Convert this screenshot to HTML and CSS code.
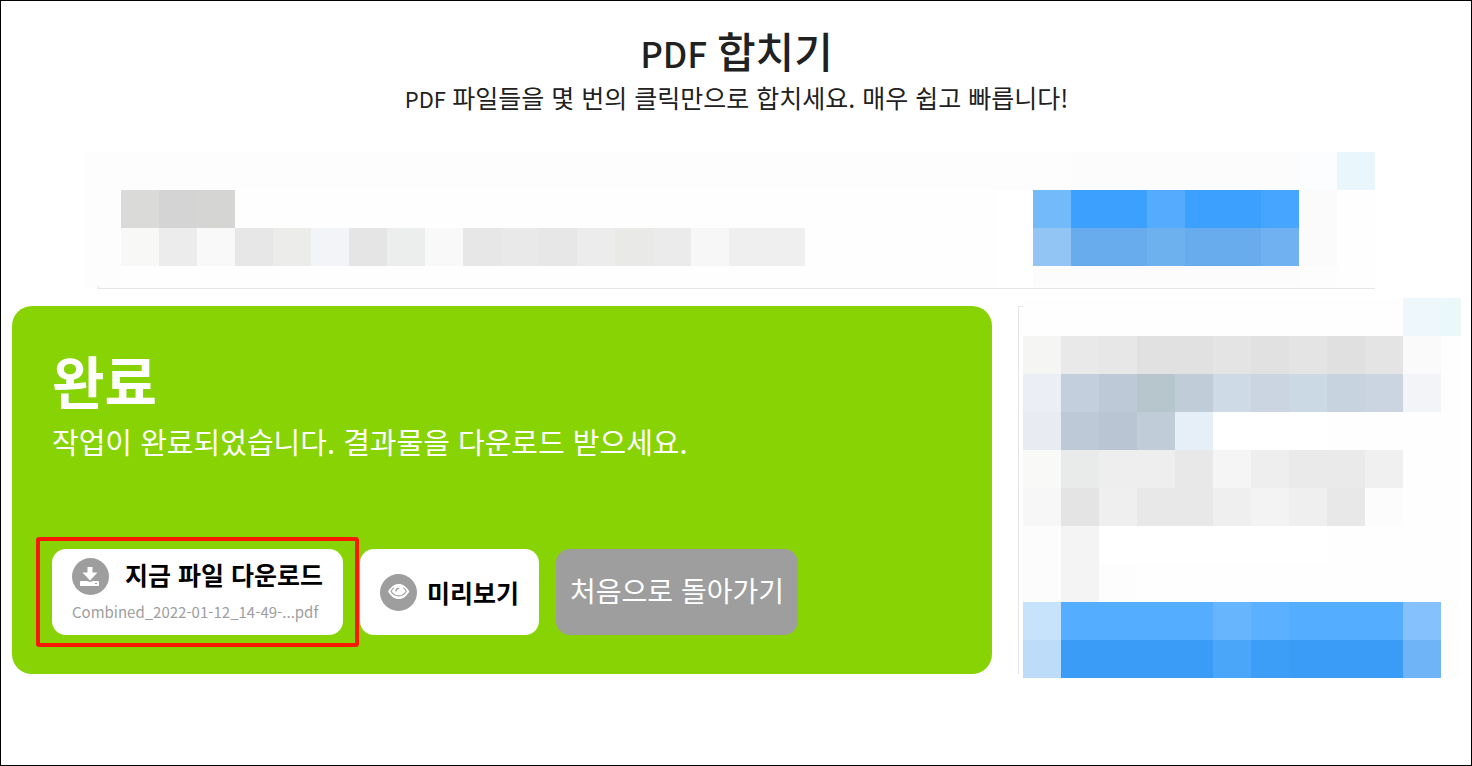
FILE: index.html
```html
<!DOCTYPE html>
<html lang="ko">
<head>
<meta charset="utf-8">
<meta name="viewport" content="width=device-width, initial-scale=1">
<title>PDF 합치기</title>
<link rel="stylesheet" href="styles.css">
</head>
<body>
<div class="page">
  <header class="intro">
    <h1 class="intro-title"><span class="intro-title-latin">PDF </span>합치기</h1>
    <p class="intro-text"><span class="intro-text-latin">PDF </span>파일들을 몇 번의 클릭만으로 합치세요. 매우 쉽고 빠릅니다!</p>
  </header>

  <aside class="banner" aria-hidden="true">
    <svg class="mosaic" viewBox="0 0 1292 137" shape-rendering="crispEdges">
      <path fill="#fdfdfd" d="M1 0h1215v38H1zM1 38h37v98H1zM950 38h304v98H950z"/>
      <path fill="#fefefe" d="M38 38h874v98H38zM1254 38h38v98h-38z"/>
      <path fill="#fcfcfc" d="M988 0h228v38H988z"/>
      <path fill="#fbfdff" d="M1216 0h38v38h-38z"/>
      <path fill="#e9f7fd" d="M1254 0h38v38h-38z"/>
      <path fill="#dadad8" d="M38 38h38v38H38z"/>
      <path fill="#d4d4d4" d="M76 38h38v38H76z"/>
      <path fill="#d5d5d3" d="M114 38h38v38h-38z"/>
      <path fill="#f8f8f6" d="M38 76h38v38H38z"/>
      <path fill="#ececec" d="M76 76h38v38H76z"/>
      <path fill="#f9f9f9" d="M114 76h38v38h-38zM342 76h38v38h-38z"/>
      <path fill="#e7e7e7" d="M152 76h38v38h-38zM380 76h38v38h-38zM456 76h38v38h-38z"/>
      <path fill="#ececea" d="M190 76h38v38h-38z"/>
      <path fill="#f3f4f8" d="M228 76h38v38h-38z"/>
      <path fill="#e5e5e5" d="M266 76h38v38h-38z"/>
      <path fill="#eceeed" d="M304 76h38v38h-38z"/>
      <path fill="#e9e9e9" d="M418 76h38v38h-38z"/>
      <path fill="#ececec" d="M494 76h38v38h-38z"/>
      <path fill="#e9e9e7" d="M532 76h38v38h-38z"/>
      <path fill="#ebebeb" d="M570 76h38v38h-38z"/>
      <path fill="#f7f7f7" d="M608 76h38v38h-38z"/>
      <path fill="#efefef" d="M646 76h76v38h-76z"/>
      <path fill="#73bafb" d="M950 38h38v38h-38z"/>
      <path fill="#3ca0ff" d="M988 38h76v38h-76zM1102 38h76v38h-76z"/>
      <path fill="#55acff" d="M1064 38h38v38h-38z"/>
      <path fill="#45a5ff" d="M1178 38h38v38h-38z"/>
      <path fill="#92c4f4" d="M950 76h38v38h-38z"/>
      <path fill="#69acee" d="M988 76h76v38h-76zM1102 76h76v38h-76z"/>
      <path fill="#6eb1ef" d="M1064 76h38v38h-38z"/>
      <path fill="#70b2f1" d="M1178 76h38v38h-38z"/>
      <path fill="#fbfbfb" d="M1216 38h38v76h-38z"/>
      <path fill="#fcfcfc" d="M950 114h266v19H950z"/>
      <path fill="#e5e5e5" d="M15 134h1v2h1276v1H15z"/>
    </svg>
  </aside>

  <main class="content">
    <section class="done">
      <h2 class="done-title">완료</h2>
      <p class="done-text">작업이 완료되었습니다. 결과물을 다운로드 받으세요.</p>
      <div class="actions">
        <button class="btn btn-download" type="button">
          <span class="btn-row">
            <svg class="icon" viewBox="0 0 37 37" aria-hidden="true">
              <circle cx="18.500" cy="18.500" r="18.500" fill="#9e9e9e"/>
              <path fill="#fff" d="M15.500 9h5v5.500H25.500L18 22.500 10.500 14.500h5z"/>
              <path fill="#fff" fill-rule="evenodd" d="M9 23h6.200l2.800 1 2.800-1H26q1 0 1 1v4H8v-4q0-1 1-1zM23 25v1h2v-1z"/>
            </svg>
            <span class="btn-label">지금 파일 다운로드</span>
          </span>
          <span class="btn-file">Combined_2022-01-12_14-49-...pdf</span>
        </button>
        <button class="btn btn-preview" type="button">
          <svg class="icon" viewBox="0 0 37 37" aria-hidden="true">
            <circle cx="18.500" cy="18.500" r="18.500" fill="#9e9e9e"/>
            <path fill="#fff" d="M8 17.500C11 12.500 14.500 10 18.700 10s7.700 2.500 10.700 7.500C26.400 22.500 23 25 18.700 25S11 22.500 8 17.500z"/>
            <path fill="none" stroke="#9e9e9e" stroke-width="1.100" d="M14 13.600c-1.300 1-2.200 2.300-2.900 3.900 2 3 4.500 4.400 7.600 4.400s5.600-1.400 7.600-4.400c-.7-1.600-1.600-2.900-2.900-3.900"/>
            <path fill="none" stroke="#9e9e9e" stroke-width="1.300" stroke-linecap="round" d="M16 17a2.700 2.700 0 0 1 2.700-2.700"/>
          </svg>
          <span class="btn-label">미리보기</span>
        </button>
        <button class="btn btn-restart" type="button">처음으로 돌아가기</button>
      </div>
    </section>

    <aside class="side" aria-hidden="true">
      <svg class="mosaic" viewBox="0 0 443 380" shape-rendering="crispEdges">
        <path fill="#fefefe" d="M5 0h438v380H5z"/>
        <path fill="#e5e5e5" d="M0 8h5v1H1v367H0z"/>
        <path fill="#eef8fc" d="M385 0h38v38h-38z"/>
        <path fill="#eaf8fa" d="M423 0h20v38h-20z"/>
        <path fill="#f5f5f3" d="M5 38h38v38H5z"/>
        <path fill="#e9e9e9" d="M43 38h38v38H43z"/>
        <path fill="#e7e7e7" d="M81 38h38v38H81z"/>
        <path fill="#e1e1e1" d="M119 38h76v38h-76zM233 38h38v38h-38z"/>
        <path fill="#e4e4e4" d="M195 38h38v38h-38zM271 38h38v38h-38zM347 38h38v38h-38z"/>
        <path fill="#e0e0e0" d="M309 38h38v38h-38z"/>
        <path fill="#fafafa" d="M385 38h38v38h-38z"/>
        <path fill="#ebeef5" d="M5 76h38v38H5z"/>
        <path fill="#c3cfdc" d="M43 76h38v38H43z"/>
        <path fill="#bdc9d6" d="M81 76h38v38H81z"/>
        <path fill="#b7c5cd" d="M119 76h38v38h-38z"/>
        <path fill="#c1ccd9" d="M157 76h38v38h-38z"/>
        <path fill="#cedae6" d="M195 76h38v38h-38z"/>
        <path fill="#cad5e1" d="M233 76h38v38h-38zM347 76h38v38h-38z"/>
        <path fill="#cbd9e4" d="M271 76h38v38h-38z"/>
        <path fill="#c7d3df" d="M309 76h38v38h-38z"/>
        <path fill="#f3f4f8" d="M385 76h38v38h-38z"/>
        <path fill="#e8ecf2" d="M5 114h38v38H5z"/>
        <path fill="#bdc9d6" d="M43 114h38v38H43z"/>
        <path fill="#b9c5d2" d="M81 114h38v38H81z"/>
        <path fill="#c0cdd8" d="M119 114h38v38h-38z"/>
        <path fill="#e6eef7" d="M157 114h38v38h-38z"/>
        <path fill="#f9f9f7" d="M5 152h38v38H5z"/>
        <path fill="#e8ebea" d="M43 152h38v38H43z"/>
        <path fill="#eee" d="M81 152h76v38H81zM233 152h38v38h-38z"/>
        <path fill="#e8e8e8" d="M157 152h38v38h-38z"/>
        <path fill="#f5f5f5" d="M195 152h38v38h-38z"/>
        <path fill="#eaeaea" d="M271 152h76v38h-76z"/>
        <path fill="#f0f0f0" d="M347 152h38v38h-38z"/>
        <path fill="#f7f7f7" d="M5 190h38v38H5z"/>
        <path fill="#e4e4e4" d="M43 190h38v38H43z"/>
        <path fill="#efefef" d="M81 190h38v38H81zM195 190h38v38h-38zM271 190h38v38h-38z"/>
        <path fill="#e8e8e8" d="M119 190h76v38h-76zM309 190h38v38h-38z"/>
        <path fill="#f3f3f3" d="M233 190h38v38h-38z"/>
        <path fill="#fcfcfc" d="M347 190h38v38h-38zM5 228h38v76H5z"/>
        <path fill="#f4f4f4" d="M43 228h38v76H43z"/>
        <path fill="#fff" d="M195 114h114v38H195zM81 228h228v38H81z"/>
        <path fill="#fdfdfd" d="M81 266h38v38H81zM423 342h20v38h-20z"/>
        <path fill="#c6e3fb" d="M5 304h38v38H5z"/>
        <path fill="#54adff" d="M43 304h152v38H43zM271 304h114v38H271z"/>
        <path fill="#67b5fd" d="M195 304h38v38h-38z"/>
        <path fill="#5bb0ff" d="M233 304h38v38h-38z"/>
        <path fill="#85c2fd" d="M385 304h38v38h-38z"/>
        <path fill="#bddcf9" d="M5 342h38v38H5z"/>
        <path fill="#3a9cf6" d="M43 342h152v38H43zM271 342h114v38H271z"/>
        <path fill="#4aa6f9" d="M195 342h38v38h-38z"/>
        <path fill="#3d9ef8" d="M233 342h38v38h-38z"/>
        <path fill="#6fb4f7" d="M385 342h38v38h-38z"/>
      </svg>
    </aside>
  </main>
</div>
</body>
</html>
```

FILE: styles.css
```css
* {
  box-sizing: border-box;
}

body {
  margin: 0;
  background: #fff;
  color: #212121;
  font-family: "Noto Sans CJK KR", "Noto Sans", sans-serif;
}

.page {
  min-height: 100vh;
  padding: 20px 10px 20px 11px;
  border: 1px solid #000;
}

.intro {
  text-align: center;
}

.intro-title {
  margin: 0;
  font-size: 42px;
  font-weight: 500;
  line-height: 58px;
}

.intro-title-latin {
  font-size: 35px;
  line-height: 1;
}

.intro-text {
  margin: 0;
  font-size: 25px;
  line-height: 36px;
}

.intro-text-latin {
  font-size: 22px;
  line-height: 1;
}

.mosaic {
  display: block;
  width: 100%;
  height: auto;
}

.banner {
  max-width: 1363px;
  margin-top: 37px;
  padding-left: 71px;
}

.content {
  display: grid;
  grid-template-columns: minmax(0, 1fr) 443px;
  gap: 26px;
  align-items: start;
  margin-top: 9px;
}

.done {
  margin-top: 8px;
  padding: 40px 40px 39px;
  border-radius: 20px;
  background: #87d303;
  color: #fff;
}

.done-title {
  margin: 0;
  font-size: 57px;
  font-weight: 700;
  line-height: 66px;
}

.done-text {
  margin: 0;
  font-size: 29px;
  line-height: 58px;
}

.actions {
  display: flex;
  flex-wrap: wrap;
  gap: 17px;
  margin-top: 79px;
}

.btn {
  display: flex;
  align-items: center;
  height: 86px;
  padding: 0 20px;
  border: 0;
  border-radius: 14px;
  background: #fff;
  color: #000;
  font-family: inherit;
  white-space: nowrap;
  cursor: pointer;
}

.btn-label {
  font-size: 25px;
  font-weight: 700;
  line-height: 32px;
}

.icon {
  flex: none;
  width: 37px;
  height: 37px;
}

.btn-download {
  position: relative;
  flex-direction: column;
  align-items: flex-start;
  justify-content: center;
  padding-top: 3px;
}

.btn-download::after {
  content: "";
  position: absolute;
  inset: -12px -16px;
  border: 4px solid #f91800;
  border-radius: 3px;
}

.btn-row {
  display: flex;
  gap: 16px;
}

.btn-file {
  color: #9e9e9e;
  font-size: 15px;
  line-height: 34px;
}

.btn-preview {
  gap: 10px;
}

.btn-restart {
  padding: 0 14px 4px;
  background: #9e9e9e;
  color: #fff;
  font-size: 28px;
}
```
